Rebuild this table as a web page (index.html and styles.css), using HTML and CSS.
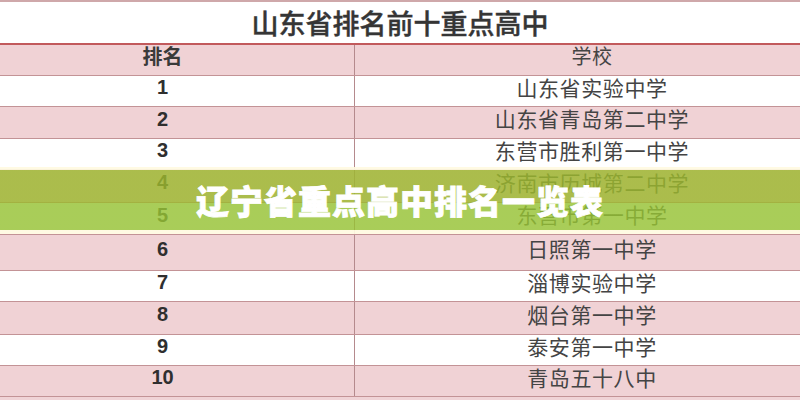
FILE: index.html
```html
<!DOCTYPE html>
<html lang="zh-CN">
<head>
<meta charset="utf-8">
<title>辽宁省重点高中排名一览表</title>
<link rel="stylesheet" href="styles.css">
</head>
<body>
<div class="sheet">
  <div class="title">山东省排名前十重点高中</div>
  <div class="rows">
    <div class="row pink head"><div class="rank">排名</div><div class="school">学校</div></div>
    <div class="row"><div class="rank">1</div><div class="school">山东省实验中学</div></div>
    <div class="row pink"><div class="rank">2</div><div class="school">山东省青岛第二中学</div></div>
    <div class="row"><div class="rank">3</div><div class="school">东营市胜利第一中学</div></div>
    <div class="row pink"><div class="rank">4</div><div class="school">济南市历城第二中学</div></div>
    <div class="row"><div class="rank">5</div><div class="school">东营市第一中学</div></div>
    <div class="row pink"><div class="rank">6</div><div class="school">日照第一中学</div></div>
    <div class="row"><div class="rank">7</div><div class="school">淄博实验中学</div></div>
    <div class="row pink"><div class="rank">8</div><div class="school">烟台第一中学</div></div>
    <div class="row"><div class="rank">9</div><div class="school">泰安第一中学</div></div>
    <div class="row pink"><div class="rank">10</div><div class="school">青岛五十八中</div></div>
  </div>
</div>
<div class="banner">辽宁省重点高中排名一览表</div>
</body>
</html>
```

FILE: styles.css
```css
html, body {
  margin: 0;
  padding: 0;
}
body {
  width: 800px;
  height: 400px;
  overflow: hidden;
  background: #f0d3d6;
  position: relative;
  font-family: "Noto Sans CJK SC", "Noto Sans", sans-serif;
  color: #454545;
}
.sheet {
  margin-left: -29px;
  width: 858px;
  background: #ffffff;
}
.title {
  height: 41px;
  border-top: 2px solid #cfa8aa;
  border-bottom: 2px solid #c25a5c;
  display: flex;
  align-items: center;
  justify-content: center;
  font-size: 27px;
  font-weight: 500;
  color: #353535;
  -webkit-text-stroke: 0.4px #353535;
  background: #ffffff;
  line-height: 1;
}
.rows {
  display: flex;
  flex-direction: column;
}
.row {
  box-sizing: border-box;
  height: 31px;
  border-bottom: 1px solid #c39396;
  display: grid;
  grid-template-columns: 384px 474px;
  background: #ffffff;
}
.row:nth-child(3) { height: 32px; }
.row:nth-child(5) { height: 33px; }
.row:nth-child(6) { height: 32px; }
.row:nth-child(7) { height: 36px; }
.row:nth-child(9) { height: 33px; }
.row.pink {
  background: #f0d2d5;
}
.rank, .school {
  display: flex;
  align-items: center;
  justify-content: center;
  padding-bottom: 8px;
  line-height: 1;
}
.rank {
  border-right: 1px solid #b58a8d;
  font-family: "Liberation Sans", "Noto Sans CJK SC", sans-serif;
  font-weight: 700;
  font-size: 20px;
  color: #2f2f2f;
}
.school {
  font-size: 21px;
  color: #444444;
  letter-spacing: 0.6px;
}
.head .rank {
  font-family: "Noto Sans CJK SC", sans-serif;
  font-size: 20px;
  color: #3a3a3a;
}
.head .school {
  font-size: 20px;
}
.banner {
  position: absolute;
  left: 0;
  top: 167px;
  width: 800px;
  height: 60px;
  border-top: 3px solid rgba(255, 250, 225, 0.92);
  border-bottom: 4px solid rgba(255, 250, 225, 0.92);
  background: linear-gradient(to bottom, rgba(156, 184, 46, 0.82) 0, rgba(156, 184, 46, 0.82) 33px, rgba(150, 194, 52, 0.82) 33px);
  background-origin: padding-box;
  background-clip: padding-box;
  display: flex;
  align-items: center;
  justify-content: center;
  color: #ffffff;
  font-family: "Noto Sans CJK SC", sans-serif;
  font-weight: 900;
  font-size: 33px;
  letter-spacing: 1px;
  -webkit-text-stroke: 0.8px #ffffff;
  line-height: 1;
}
```
